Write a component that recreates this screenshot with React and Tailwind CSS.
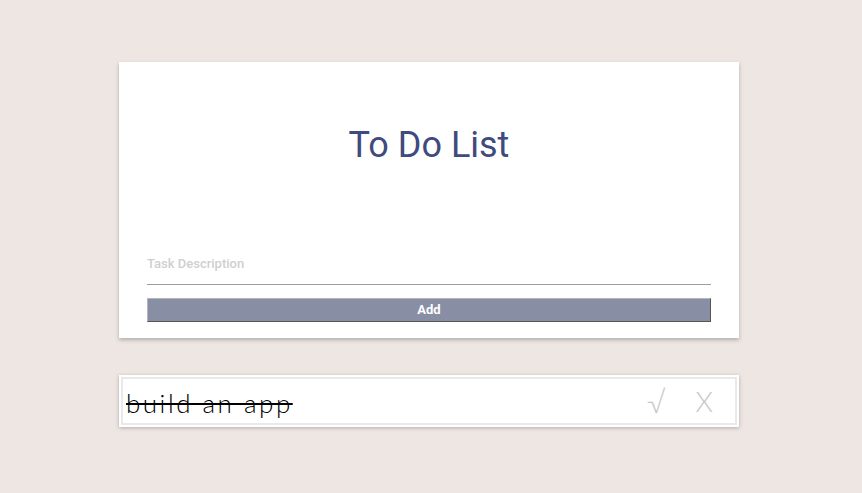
export default function App() {
    return (
        <div className="min-h-[493px] bg-[#ede6e3] pt-[62px] font-['Roboto',sans-serif]">
            <div className="ml-[119px] w-[620px] bg-white px-[28px] pt-[62px] pb-[16px] shadow-[0_2px_4px_rgba(0,0,0,0.25)]">
                <h1 className="h-[42px] text-center text-[36px] leading-[42px] text-[#3f4a7e]">To Do List</h1>
                <input
                    className="mt-[84px] block h-[35px] w-full border-b border-[#9e9e9e] pb-[8px] text-[13px] font-medium outline-none placeholder:text-[#cfcfcf]"
                    placeholder="Task Description"
                />
                <button className="mt-[13px] block h-[24px] w-full border border-t-[#b5b5b5] border-l-[#b5b5b5] border-r-[#555] border-b-[#555] bg-[#888ea3] text-[13px] font-bold text-white">
                    Add
                </button>
            </div>
            <div className="ml-[119px] mt-[37px] w-[620px] bg-white p-[2px] shadow-[0_1px_4px_rgba(0,0,0,0.25)]">
                <div className="flex h-[48px] items-center border-[2px] border-[#e9e9e9] pl-[3px] pr-[22px]">
                    <span className="flex-1 pt-[4px] font-['Lato',sans-serif] text-[26px] font-light tracking-[2.5px] text-black line-through decoration-2">
                        build an app
                    </span>
                    <span className="font-['Lato',sans-serif] text-[30px] font-light text-[#c8c8c8]">√</span>
                    <span className="ml-[30px] font-['Lato',sans-serif] text-[28px] font-light text-[#c8c8c8]">X</span>
                </div>
            </div>
        </div>
    );
}
